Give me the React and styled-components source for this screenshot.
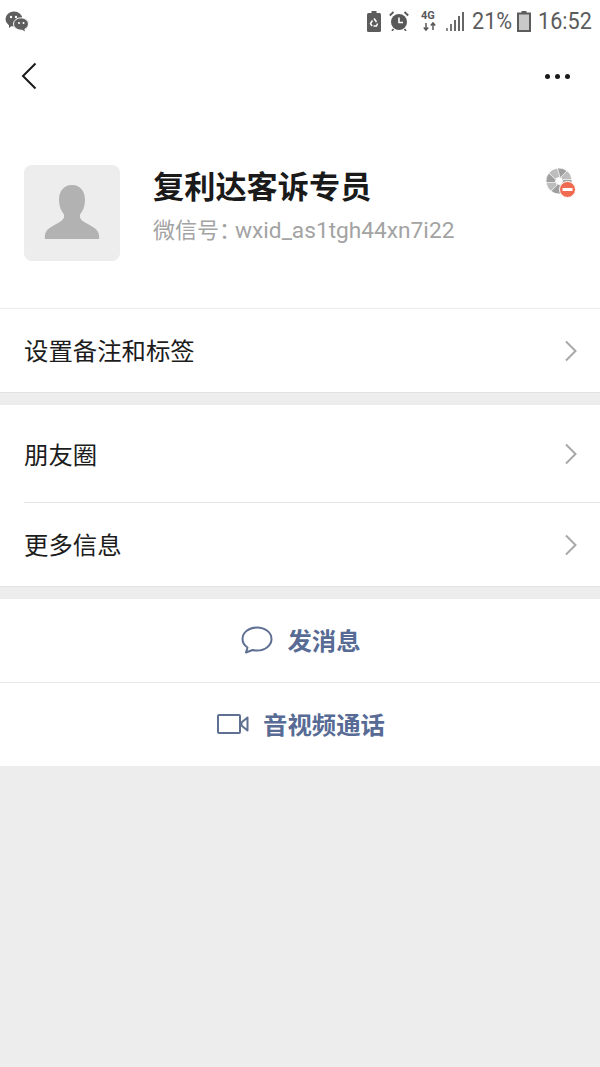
import React from 'react';
import styled, { createGlobalStyle } from 'styled-components';

const GlobalStyle = createGlobalStyle`
  html, body {
    margin: 0;
    padding: 0;
    background: #ededed;
    font-family: "Roboto", "Noto Sans CJK SC", sans-serif;
  }
`;

const Page = styled.div`
  width: 600px;
  height: 1067px;
  overflow: hidden;
  background: #ededed;
  display: flex;
  flex-direction: column;
`;

const StatusBar = styled.div`
  height: 42px;
  background: #fff;
  display: flex;
  align-items: center;
  justify-content: space-between;
  padding: 0 8px 0 5px;
  color: #5c5c5c;
`;

const StatusRight = styled.div`
  display: flex;
  align-items: center;
`;

const StatusText = styled.span`
  display: inline-block;
  width: ${(p) => p.$w}px;
  font-size: 24px;
  line-height: 42px;
  white-space: nowrap;
  transform: scaleX(0.9);
  transform-origin: left center;
`;

const NavBar = styled.div`
  height: 66px;
  box-sizing: border-box;
  padding: 2px 30px 0 20px;
  background: #fff;
  display: flex;
  align-items: center;
  justify-content: space-between;
`;

const Dots = styled.div`
  display: flex;
  gap: 5px;
`;

const Dot = styled.span`
  width: 5px;
  height: 5px;
  border-radius: 50%;
  background: #1a1a1a;
`;

const Profile = styled.div`
  height: 201px;
  background: #fff;
  display: flex;
  align-items: flex-start;
  padding: 57px 24px 0;
  box-sizing: border-box;
  border-bottom: 1px solid #ececec;
`;

const Avatar = styled.div`
  width: 96px;
  height: 96px;
  border-radius: 8px;
  background: #ededed;
  display: flex;
  align-items: center;
  justify-content: center;
  flex-shrink: 0;
`;

const ProfileInfo = styled.div`
  margin-left: 33px;
  margin-top: 1px;
  flex: 1;
  display: flex;
  flex-direction: column;
`;

const Name = styled.div`
  font-size: 31.2px;
  line-height: 44px;
  font-weight: 700;
  color: #1a1a1a;
`;

const WxId = styled.div`
  margin-top: 5px;
  font-size: 22px;
  line-height: 32px;
  color: #a3a3a3;
`;

const WxIdValue = styled.span`
  margin-left: -6px;
  font-size: 22.7px;
`;

const BadgeSlot = styled.div`
  margin-top: 2px;
  margin-right: -1px;
`;

const Section = styled.div`
  background: #fff;
  border-bottom: 1px solid #e2e2e2;
  margin-bottom: ${(p) => p.$mb || 0}px;
`;

const Row = styled.div`
  height: ${(p) => p.$h}px;
  display: flex;
  align-items: center;
  justify-content: space-between;
  padding: 0 22px 0 24px;
  box-sizing: border-box;
`;

const RowLabel = styled.span`
  margin-top: ${(p) => p.$mt ?? -2}px;
  font-size: 24.4px;
  color: #1c1c1c;
`;

const InsetLine = styled.div`
  height: 1px;
  margin-left: 24px;
  background: #e6e6e6;
`;

const ActionRow = styled.div`
  height: ${(p) => p.$h}px;
  box-sizing: border-box;
  padding: 0 0 2px 2px;
  display: flex;
  align-items: center;
  justify-content: center;
  gap: 14px;
  color: #576b95;
  font-size: 24.4px;
  font-weight: 700;
`;

const FullLine = styled.div`
  height: 1px;
  background: #e8e8e8;
`;

const Actions = styled.div`
  background: #fff;
`;

const Chevron = () => (
  <svg width="14" height="22" viewBox="0 0 14 22" fill="none">
    <path d="M2 1.5 L11.5 11 L2 20.5" stroke="#a8a8a8" strokeWidth="2" />
  </svg>
);

const WechatIcon = () => (
  <svg width="24" height="22" viewBox="0 0 24 22">
    <ellipse cx="9" cy="9" rx="8.5" ry="7.5" fill="#5e5e5e" />
    <path d="M4 14 L4 18 L8 15 Z" fill="#5e5e5e" />
    <ellipse cx="16" cy="14" rx="7.5" ry="6.2" fill="#5e5e5e" stroke="#fff" strokeWidth="1" />
    <path d="M19 18 L20 21.5 L16 19 Z" fill="#5e5e5e" />
    <circle cx="6" cy="7" r="1.2" fill="#fff" />
    <circle cx="11" cy="7" r="1.2" fill="#fff" />
    <circle cx="14" cy="13" r="1" fill="#fff" />
    <circle cx="18.5" cy="13" r="1" fill="#fff" />
  </svg>
);

const RecycleBatteryIcon = () => (
  <svg width="14" height="21" viewBox="0 0 14 21" style={{ marginRight: 8 }}>
    <rect x="4.5" y="0" width="5" height="2" fill="#5c5c5c" />
    <rect x="0" y="2" width="14" height="19" rx="1.5" fill="#5c5c5c" />
    <path
      d="M7 7.5 L9.5 11 M10.5 12.5 L9.5 15 H6.5 M5 15 L3.5 12.5 L5.5 9.5"
      fill="none"
      stroke="#fff"
      strokeWidth="1.5"
    />
  </svg>
);

const AlarmIcon = () => (
  <svg width="20" height="20" viewBox="0 0 20 20" style={{ marginRight: 12 }}>
    <circle cx="10" cy="11" r="8" fill="#585858" />
    <path d="M10 6.5 V11.5 H14" fill="none" stroke="#fff" strokeWidth="1.6" />
    <path d="M0.8 4.5 L4.5 1 M19.2 4.5 L15.5 1" stroke="#585858" strokeWidth="1.8" />
    <path d="M4.5 18 L3 20 M15.5 18 L17 20" stroke="#585858" strokeWidth="1.6" />
  </svg>
);

const NetworkIcon = () => (
  <svg width="17" height="22" viewBox="0 0 17 22" style={{ marginRight: 8 }}>
    <text x="0" y="9" fontSize="11" fontWeight="700" fontFamily="Roboto, sans-serif" fill="#585858">4G</text>
    <path d="M5 13 V20 M2.8 17.5 L5 20 L7.2 17.5" fill="none" stroke="#585858" strokeWidth="1.5" />
    <path d="M12 20 V13 M9.8 15.5 L12 13 L14.2 15.5" fill="none" stroke="#585858" strokeWidth="1.5" />
  </svg>
);

const SignalIcon = () => (
  <svg width="19" height="20" viewBox="0 0 19 20" style={{ marginRight: 7 }}>
    <rect x="0" y="17" width="2" height="3" fill="#8a8a8a" />
    <rect x="4" y="13" width="2" height="7" fill="#777" />
    <rect x="8" y="9" width="2" height="11" fill="#6a6a6a" />
    <rect x="12" y="5" width="2" height="15" fill="#666" />
    <rect x="16" y="1" width="2" height="19" fill="#666" />
  </svg>
);

const BatteryIcon = () => (
  <svg width="14" height="21" viewBox="0 0 14 21" style={{ marginLeft: 5, marginRight: 7 }}>
    <rect x="4.5" y="0" width="5" height="2" fill="#5c5c5c" />
    <rect x="1" y="2.5" width="12" height="17.5" fill="#c9c9c9" stroke="#5c5c5c" strokeWidth="2" />
  </svg>
);

const BackIcon = () => (
  <svg width="18" height="28" viewBox="0 0 18 28" fill="none">
    <path d="M15.5 1.5 L3 14 L15.5 26.5" stroke="#1a1a1a" strokeWidth="2" />
  </svg>
);

const PersonIcon = () => (
  <svg width="56" height="56" viewBox="0 0 56 56">
    <path
      fill="#b2b2b2"
      d="M28 0 C19 0 15 7 15 15 C15 21 17 26 20 29.5 C20.6 33 19 35 15 37.5 C9 41 1.5 44 1 50 C0.8 53 0.8 54 1 54 H55 C55.2 54 55.2 53 55 50 C54.5 44 47 41 41 37.5 C37 35 35.4 33 36 29.5 C39 26 41 21 41 15 C41 7 37 0 28 0 Z"
    />
  </svg>
);

const blades = [0, 45, 90, 135, 180, 225, 270, 315];

const ShutterBadge = () => (
  <svg width="32" height="32" viewBox="0 0 32 32">
    <circle cx="14" cy="14" r="13" fill="#fff" />
    <g transform="translate(14 14)">
      {blades.map((a, i) => (
        <path
          key={a}
          d="M-1.5 -13 A13 13 0 0 1 8 -10.2 L3.4 -2.2 L-1.5 -4.2 Z"
          fill={i % 2 ? '#bdbdbd' : '#9f9f9f'}
          stroke="#fff"
          strokeWidth="0.7"
          transform={`rotate(${a})`}
        />
      ))}
    </g>
    <circle cx="22.5" cy="22.5" r="8" fill="#ee6a50" stroke="#fff" strokeWidth="1" />
    <rect x="17.5" y="21" width="10" height="3" fill="#fff" />
  </svg>
);

const BubbleIcon = () => (
  <svg width="32" height="28" viewBox="0 0 32 28" fill="none">
    <path
      d="M16 1.5 C8 1.5 1.5 6.5 1.5 13 C1.5 16.5 3.5 19.5 6.5 21.5 L5 26.5 L11.5 24 C13 24.4 14.5 24.6 16 24.6 C24 24.6 30.5 19.5 30.5 13 C30.5 6.5 24 1.5 16 1.5 Z"
      stroke="#5f7092"
      strokeWidth="2"
      strokeLinejoin="round"
    />
  </svg>
);

const VideoIcon = () => (
  <svg width="32" height="20" viewBox="0 0 32 20" fill="none">
    <rect x="1" y="1" width="22" height="18" rx="1" stroke="#5f7092" strokeWidth="2" />
    <path d="M30.5 3.5 V16.5 L24.5 11.5 V8.5 Z" stroke="#5f7092" strokeWidth="2" strokeLinejoin="round" />
  </svg>
);

export default function App() {
  return (
    <>
      <GlobalStyle />
      <Page>
        <StatusBar>
          <WechatIcon />
          <StatusRight>
            <RecycleBatteryIcon />
            <AlarmIcon />
            <NetworkIcon />
            <SignalIcon />
            <StatusText $w={40}>21%</StatusText>
            <BatteryIcon />
            <StatusText $w={54}>16:52</StatusText>
          </StatusRight>
        </StatusBar>
        <NavBar>
          <BackIcon />
          <Dots>
            <Dot />
            <Dot />
            <Dot />
          </Dots>
        </NavBar>
        <Profile>
          <Avatar>
            <PersonIcon />
          </Avatar>
          <ProfileInfo>
            <Name>复利达客诉专员</Name>
            <WxId>
              微信号：<WxIdValue>wxid_as1tgh44xn7i22</WxIdValue>
            </WxId>
          </ProfileInfo>
          <BadgeSlot>
            <ShutterBadge />
          </BadgeSlot>
        </Profile>
        <Section $mb={12}>
          <Row $h={83}>
            <RowLabel>设置备注和标签</RowLabel>
            <Chevron />
          </Row>
        </Section>
        <Section $mb={12}>
          <Row $h={97}>
            <RowLabel $mt={0}>朋友圈</RowLabel>
            <Chevron />
          </Row>
          <InsetLine />
          <Row $h={83}>
            <RowLabel>更多信息</RowLabel>
            <Chevron />
          </Row>
        </Section>
        <Actions>
          <ActionRow $h={83}>
            <BubbleIcon />
            发消息
          </ActionRow>
          <FullLine />
          <ActionRow $h={83}>
            <VideoIcon />
            音视频通话
          </ActionRow>
        </Actions>
      </Page>
    </>
  );
}
